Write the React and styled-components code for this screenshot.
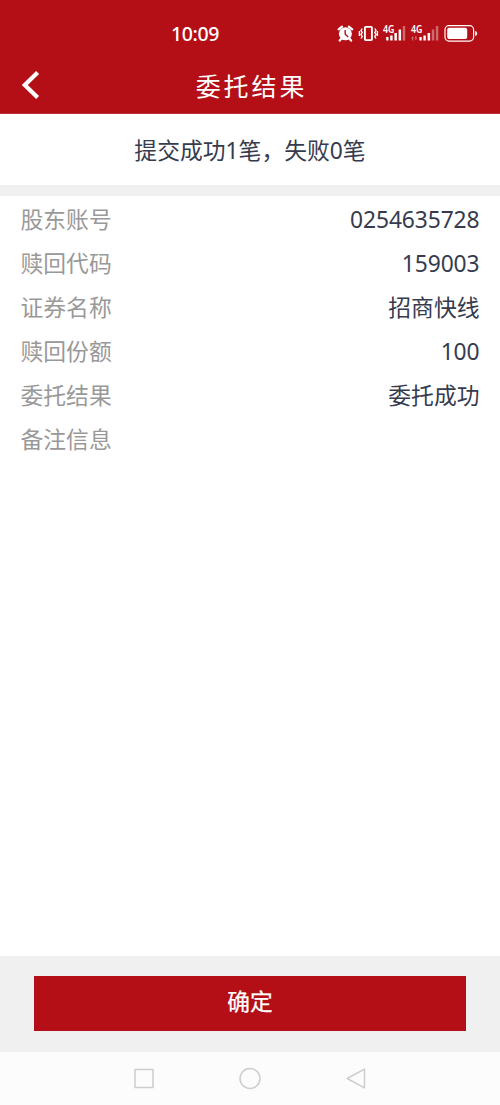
import React from 'react';
import styled, { createGlobalStyle } from 'styled-components';

const GlobalStyle = createGlobalStyle`
  * { box-sizing: border-box; }
  body {
    margin: 0;
    background: #fff;
    font-family: "Noto Sans", "Noto Sans CJK SC", sans-serif;
  }
`;

const Screen = styled.div`
  display: flex;
  flex-direction: column;
  width: 500px;
  height: 1105px;
  background: #fff;
  color: #363b4e;
`;

const Header = styled.header`
  height: 114px;
  background: #b40f16;
  color: #fff;
  border-bottom: 1px solid #b5343d;
`;

const StatusBar = styled.div`
  display: flex;
  align-items: center;
  justify-content: space-between;
  height: 57px;
  padding: 10px 22px 0 171px;
`;

const Clock = styled.span`
  font-size: 19.5px;
  font-weight: 500;
  line-height: 28px;
  letter-spacing: -0.4px;
`;

const StatusIcons = styled.svg`
  display: block;
  width: 144px;
  height: 32px;
  margin-top: -2px;
  overflow: visible;
`;

const TitleBar = styled.div`
  display: grid;
  grid-template-columns: 60px 1fr 60px;
  align-items: center;
  height: 56px;
`;

const BackButton = styled.button`
  display: flex;
  padding: 0 0 0 20px;
  border: 0;
  background: none;
  color: inherit;
`;

const Title = styled.h1`
  margin: 0;
  padding: 2px 0 0 3px;
  font-size: 25px;
  font-weight: 400;
  line-height: 36px;
  letter-spacing: 2.9px;
  text-align: center;
`;

const Summary = styled.div`
  height: 82px;
  padding-top: 20px;
  border-bottom: 11px solid #f0f0f0;
  font-size: 22.8px;
  line-height: 34px;
  text-align: center;
`;

const Details = styled.dl`
  flex: 1;
  margin: 0;
  padding: 2px 20.5px 0;
`;

const Row = styled.div`
  display: flex;
  justify-content: space-between;
  height: 44.05px;
  font-size: 22.8px;
  line-height: 44px;
`;

const Label = styled.dt`
  color: #999;
`;

const Value = styled.dd`
  margin: 0;
  letter-spacing: ${({ $numeric }) => ($numeric ? '-0.1px' : 'normal')};
`;

const Footer = styled.footer`
  height: 96px;
  padding: 20px 34px;
  background: #f0f0f0;
`;

const ConfirmButton = styled.button`
  display: block;
  width: 100%;
  height: 55px;
  padding: 0 0 4px;
  border: 0;
  background: #b40f16;
  color: #fff;
  font: 400 22.75px/34px "Noto Sans", "Noto Sans CJK SC", sans-serif;
  -webkit-text-stroke: 0.25px #fff;
`;

const NavBar = styled.nav`
  display: flex;
  justify-content: center;
  align-items: center;
  gap: 82px;
  height: 53px;
  background: #fcfcfc;
`;

const NavIcon = styled.svg`
  width: 24px;
  height: 24px;
  fill: none;
  stroke: #cdcdcd;
  stroke-width: 1.5;
`;

const rows = [
  ['股东账号', '0254635728'],
  ['赎回代码', '159003'],
  ['证券名称', '招商快线'],
  ['赎回份额', '100'],
  ['委托结果', '委托成功'],
  ['备注信息', ''],
];

const NetworkLabel = styled.text`
  font: 600 11px "Noto Sans", sans-serif;
`;

function PhoneStatus() {
  return (
    <StatusIcons viewBox="334 17 144 32" fill="#fff">
      <circle cx="345.4" cy="33.8" r="6.5" />
      <path d="M338.6 29.4l3.4-2.8M352.2 29.4l-3.4-2.8M341.3 38.8l-1.6 1.8M349.5 38.8l1.6 1.8" stroke="#fff" strokeWidth="2.2" strokeLinecap="round" />
      <path d="M345.2 30v4.2l3 2.8" fill="none" stroke="#b40f16" strokeWidth="1.4" />
      <rect x="364.9" y="26.9" width="7" height="13.2" rx="0.8" fill="none" stroke="#fff" strokeWidth="1.9" />
      <path d="M362.2 28.5l-1.2 2 1.2 2-1.2 2 1.2 2-1.2 2M359.4 31v5M374.8 28.5l1.2 2-1.2 2 1.2 2-1.2 2 1.2 2M377.4 31v5" fill="none" stroke="#fff" strokeWidth="1.4" />
      <NetworkLabel x="383" y="33.2" textLength="11.5" lengthAdjust="spacingAndGlyphs">4G</NetworkLabel>
      <path d="M386.2 37h2.3v3.6h-2.3zM390.2 35.5h2.4v5.1h-2.4zM394.4 33h2.5v7.6h-2.5zM398.6 29.5h2.5v11.1h-2.5z" />
      <path d="M402.8 26h2.4v14.6h-2.4z" opacity="0.38" />
      <NetworkLabel x="411" y="33.2" textLength="11.5" lengthAdjust="spacingAndGlyphs">4G</NetworkLabel>
      <path d="M411.2 38.3l1.4-2 1.4 2zM414.5 38.3l1.4 2 1.4-2zM412 38h1.2v2.5H412zM415.3 36h1.2v2.5h-1.2z" opacity="0.38" />
      <path d="M419.4 37h2.3v3.6h-2.3zM423.4 35.5h2.4v5.1h-2.4zM427.6 33h2.5v7.6h-2.5z" />
      <path d="M431.8 29.5h2.5v11.1h-2.5zM435.9 26h2.4v14.6h-2.4z" opacity="0.38" />
      <rect x="445" y="25.7" width="28.6" height="15.4" rx="4" fill="none" stroke="#fff" strokeWidth="1.2" />
      <rect x="447.2" y="27.8" width="20" height="11.2" rx="2" />
      <path d="M475.2 31q2 .4 2 2.5t-2 2.5z" />
    </StatusIcons>
  );
}

export default function App() {
  return (
    <>
      <GlobalStyle />
      <Screen>
        <Header>
          <StatusBar>
            <Clock>10:09</Clock>
            <PhoneStatus />
          </StatusBar>
          <TitleBar>
            <BackButton aria-label="返回">
              <svg width="22" height="30" viewBox="0 0 22 30" fill="none" stroke="#fff" strokeWidth="4.2">
                <path d="M17.6 2.5L4.8 15l12.8 12.5" />
              </svg>
            </BackButton>
            <Title>委托结果</Title>
          </TitleBar>
        </Header>
        <Summary>提交成功1笔，失败0笔</Summary>
        <Details>
          {rows.map(([label, value]) => (
            <Row key={label}>
              <Label>{label}</Label>
              <Value $numeric={/^\d+$/.test(value)}>{value}</Value>
            </Row>
          ))}
        </Details>
        <Footer>
          <ConfirmButton>确定</ConfirmButton>
        </Footer>
        <NavBar>
          <NavIcon viewBox="0 0 24 24">
            <rect x="3" y="2.5" width="18" height="18" />
          </NavIcon>
          <NavIcon viewBox="0 0 24 24">
            <circle cx="12" cy="11.5" r="10" />
          </NavIcon>
          <NavIcon viewBox="0 0 24 24">
            <path d="M20.5 2.1v18.8L3.2 11.5z" strokeLinejoin="round" />
          </NavIcon>
        </NavBar>
      </Screen>
    </>
  );
}
